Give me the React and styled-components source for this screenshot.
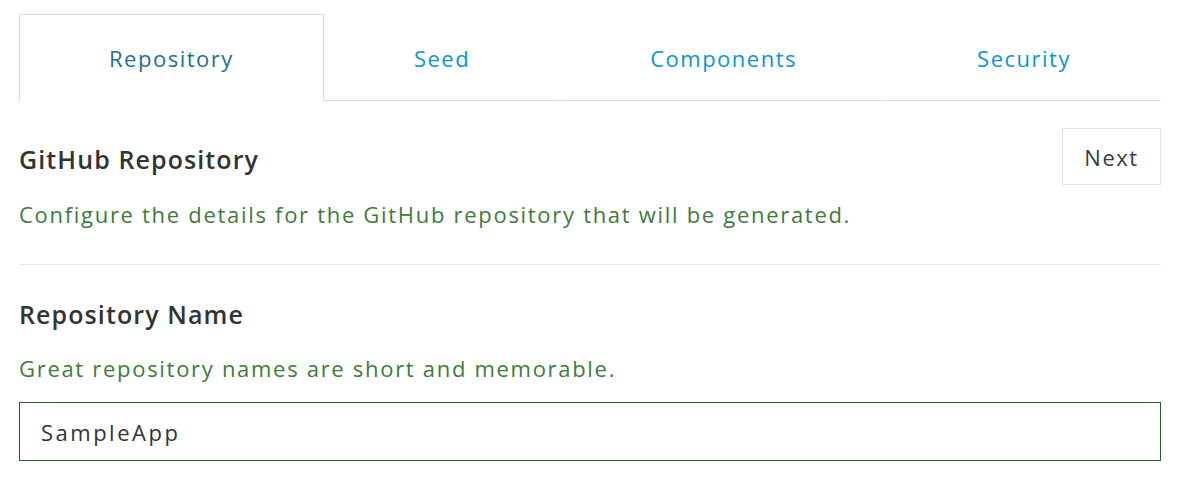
import React, { useState } from 'react';
import styled, { createGlobalStyle } from 'styled-components';

const GlobalStyle = createGlobalStyle`
  body {
    margin: 0;
    background: #fff;
    font-family: "Open Sans", "Liberation Sans", sans-serif;
  }
`;

const Page = styled.div`
  width: 1142px;
  margin-left: 19px;
  padding-top: 14px;
`;

const TabBar = styled.div`
  display: flex;
  height: 87px;
`;

const Tab = styled.button`
  flex: 1 1 auto;
  padding: 0;
  background: #fff;
  font-family: inherit;
  font-size: 22px;
  letter-spacing: 1.5px;
  cursor: pointer;
  color: ${({ active }) => (active ? '#1d6f96' : '#0a95d4')};
  border: 1px solid ${({ active }) => (active ? '#dcdcdc' : 'transparent')};
  border-bottom: 1px solid ${({ active }) => (active ? 'transparent' : '#dcdcdc')};
`;

const Header = styled.div`
  display: flex;
  justify-content: space-between;
  align-items: flex-start;
  padding-top: 27px;
`;

const Title = styled.h2`
  margin: 19px 0 0;
  font-size: 25px;
  font-weight: 600;
  letter-spacing: 1.1px;
  color: #333;
  line-height: 1;
`;

const NextButton = styled.button`
  width: 99px;
  height: 57px;
  background: #fff;
  border: 1px solid #e2e2e2;
  font-family: inherit;
  font-size: 22px;
  letter-spacing: 1.5px;
  color: #3a3a3a;
  cursor: pointer;
`;

const Hint = styled.p`
  margin: ${({ top }) => top}px 0 0;
  font-size: 22px;
  letter-spacing: 1.7px;
  color: #3e7b3c;
  line-height: 1;
`;

const Divider = styled.hr`
  border: 0;
  border-top: 1px solid #e8e8e8;
  margin: 39px 0 0;
`;

const Label = styled.h3`
  margin: 37px 0 0;
  font-size: 25px;
  font-weight: 600;
  letter-spacing: 1.1px;
  color: #333;
  line-height: 1;
`;

const Input = styled.input`
  display: block;
  box-sizing: border-box;
  width: 100%;
  height: 59px;
  margin-top: 23px;
  padding: 0 21px;
  border: 1px solid #2c5b2c;
  font-family: inherit;
  font-size: 22px;
  letter-spacing: 2.5px;
  color: #333;
  outline: none;
`;

const tabs = ['Repository', 'Seed', 'Components', 'Security'];

export default function App() {
  const [active, setActive] = useState('Repository');
  const [name, setName] = useState('SampleApp');

  return (
    <Page>
      <GlobalStyle />
      <TabBar>
        {tabs.map((t) => (
          <Tab key={t} active={t === active ? 1 : 0} onClick={() => setActive(t)}>
            {t}
          </Tab>
        ))}
      </TabBar>
      <Header>
        <Title>GitHub Repository</Title>
        <NextButton>Next</NextButton>
      </Header>
      <Hint top={18}>Configure the details for the GitHub repository that will be generated.</Hint>
      <Divider />
      <Label>Repository Name</Label>
      <Hint top={30}>Great repository names are short and memorable.</Hint>
      <Input value={name} onChange={(e) => setName(e.target.value)} />
    </Page>
  );
}
